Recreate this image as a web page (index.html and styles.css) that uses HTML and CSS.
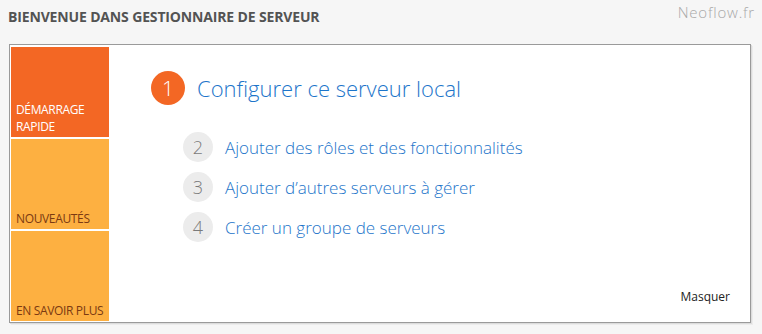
FILE: index.html
```html
<!DOCTYPE html>
<html>
  <head>
    <link rel="stylesheet" href="styles.css">
  </head>
  <body>
    <div class="header">
      <div class="title">BIENVENUE DANS GESTIONNAIRE DE SERVEUR</div>
      <div class="brand">Neoflow.fr</div>
    </div>
    <div class="panel">
      <div class="tiles">
        <div class="tile active">DÉMARRAGE<br>RAPIDE</div>
        <div class="tile">NOUVEAUTÉS</div>
        <div class="tile">EN SAVOIR PLUS</div>
      </div>
      <div class="main">
        <div class="step first">
          <span class="num">1</span>
          <span class="label">Configurer ce serveur local</span>
        </div>
        <div class="steps">
          <div class="step">
            <span class="num">2</span>
            <span class="label">Ajouter des rôles et des fonctionnalités</span>
          </div>
          <div class="step">
            <span class="num">3</span>
            <span class="label">Ajouter d’autres serveurs à gérer</span>
          </div>
          <div class="step">
            <span class="num">4</span>
            <span class="label">Créer un groupe de serveurs</span>
          </div>
        </div>
        <div class="hide">Masquer</div>
      </div>
    </div>
  </body>
</html>
```

FILE: styles.css
```css
html {
  font-family: "Open Sans", "Noto Sans", sans-serif;
}

* {
  box-sizing: border-box;
}

body {
  margin: 0;
  background: #f6f6f6;
  width: 762px;
  height: 334px;
}

.header {
  display: flex;
  justify-content: space-between;
  align-items: flex-start;
  height: 44px;
  padding: 7px 7px 0 8px;
}

.title {
  font-size: 14px;
  font-weight: 700;
  color: #535353;
  letter-spacing: -0.15px;
}

.brand {
  font-size: 15px;
  font-weight: 300;
  color: #a8a8a8;
  margin-top: -5px;
  letter-spacing: 0.8px;
}

.panel {
  display: flex;
  margin-left: 9px;
  width: 742px;
  height: 279px;
  border: 1px solid #9a9a9a;
  box-shadow: 1px 1px 0 #dcdcdc, 2px 2px 0 #ececec;
  background: #fff;
  padding: 2px 2px 1px 1px;
}

.tiles {
  display: flex;
  flex-direction: column;
  gap: 2px;
  width: 98px;
}

.tile {
  flex: 1;
  display: flex;
  align-items: flex-end;
  background: #fdb041;
  color: #7b3a12;
  font-size: 12px;
  line-height: 17px;
  letter-spacing: -0.35px;
  white-space: nowrap;
  padding: 0 2px 2px 5px;
}

.tile.active {
  background: #f36724;
  color: #fff;
}

.main {
  flex: 1;
  display: flex;
  flex-direction: column;
  padding: 24px 18px 16px 42px;
}

.step {
  display: flex;
  align-items: center;
  gap: 12px;
}

.num {
  display: flex;
  align-items: center;
  justify-content: center;
  width: 30px;
  height: 30px;
  border-radius: 50%;
  background: #ececec;
  color: #7a7a7a;
  font-size: 18px;
  font-weight: 300;
}

.label {
  color: #1d75ca;
  font-size: 17px;
  font-weight: 300;
}

.step.first .num {
  width: 34px;
  height: 34px;
  background: #f36724;
  color: #fff;
  font-size: 21px;
}

.step.first .label {
  font-size: 22px;
}

.steps {
  display: flex;
  flex-direction: column;
  gap: 10px;
  margin: 27px 0 0 32px;
}

.hide {
  margin-top: auto;
  align-self: flex-end;
  font-size: 12px;
  color: #222;
}
```
